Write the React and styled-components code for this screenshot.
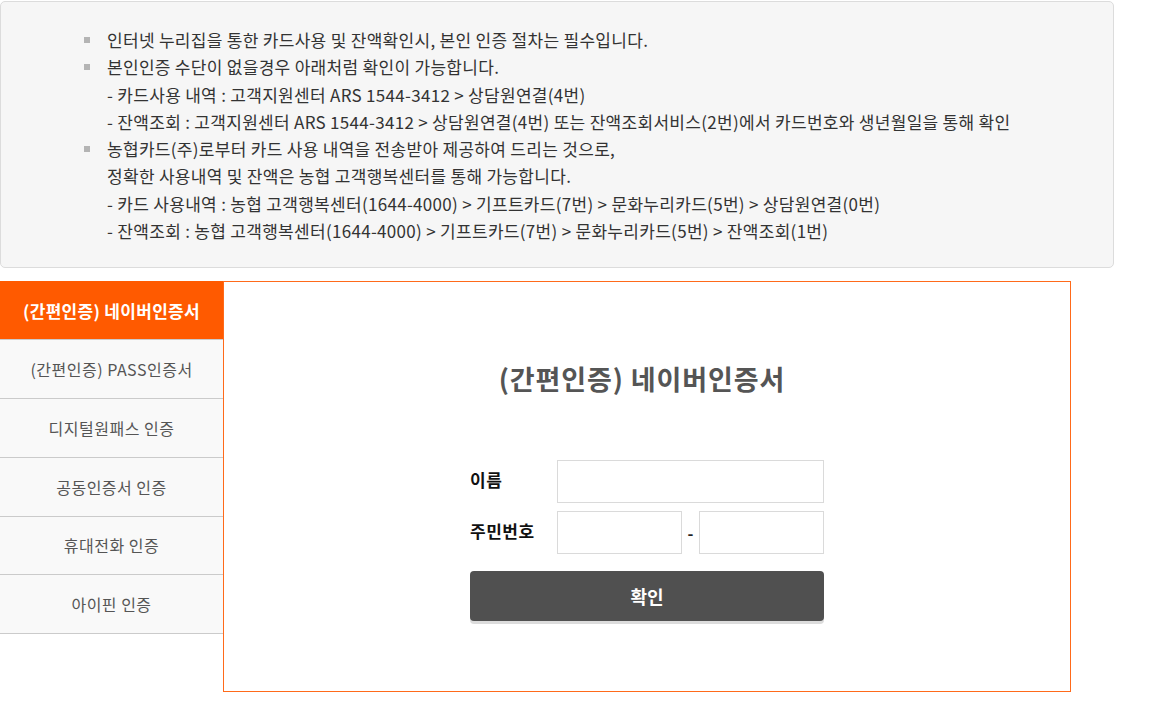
import React from "react";
import styled, { createGlobalStyle } from "styled-components";

const GlobalStyle = createGlobalStyle`
  * { box-sizing: border-box; }
  body {
    margin: 0;
    background: #fff;
    font-family: "Noto Sans CJK KR", "Noto Sans", sans-serif;
    color: #333;
  }
`;

const Page = styled.div`
  width: 1166px;
  padding-top: 1px;
`;

const Notice = styled.div`
  width: 1114px;
  background: #f6f6f6;
  border: 1px solid #dcdcdc;
  border-radius: 5px;
  padding: 24px 0 23px 81px;
`;

const NoticeList = styled.ul`
  list-style: none;
  margin: 0;
  padding: 0;
`;

const NoticeItem = styled.li`
  position: relative;
  padding-left: 25px;
  font-size: 17px;
  line-height: 27.3px;
  letter-spacing: 0.3px;
  color: #333;

  &::before {
    content: "";
    position: absolute;
    left: 2px;
    top: 11px;
    width: 6px;
    height: 6px;
    background: #b4b4b4;
  }
`;

const SubLine = styled.div`
  line-height: 27.3px;
`;

const Body = styled.div`
  display: flex;
  margin-top: 13px;
`;

const TabList = styled.ul`
  list-style: none;
  margin: 0;
  padding: 0;
  width: 223px;
  flex-shrink: 0;
`;

const Tab = styled.li`
  height: 58.8px;
  display: flex;
  align-items: center;
  justify-content: center;
  border-bottom: 1px solid #cbcbcb;
  background: ${(p) => (p.$active ? "#ff5a00" : "#f9f9f9")};
  color: ${(p) => (p.$active ? "#fff" : "#555")};
  font-weight: ${(p) => (p.$active ? 700 : 400)};
  font-size: ${(p) => (p.$active ? 17 : 16)}px;
  letter-spacing: ${(p) => (p.$active ? 0.3 : 0.5)}px;
`;

const Panel = styled.div`
  width: 848px;
  height: 411px;
  border: 1px solid #ff6a1a;
  padding-top: 78px;
  display: flex;
  flex-direction: column;
  align-items: center;
`;

const Title = styled.h2`
  margin: 0 0 0 -10px;
  font-size: 27px;
  line-height: 38px;
  font-weight: 700;
  color: #555;
  letter-spacing: 0.9px;
`;

const Form = styled.form`
  width: 354px;
  margin-top: 62px;
  display: flex;
  flex-direction: column;
  gap: 8px;
`;

const Row = styled.div`
  display: flex;
  align-items: center;
`;

const Label = styled.label`
  width: 87px;
  flex-shrink: 0;
  font-size: 17px;
  font-weight: 700;
  color: #111;
  letter-spacing: 0.5px;
  padding-bottom: 4px;
`;

const Input = styled.input`
  height: 43px;
  width: ${(p) => p.$w}px;
  border: 1px solid #dadada;
  background: #fff;
  padding: 0 10px;
  font-size: 15px;
  outline: none;
`;

const Dash = styled.span`
  width: 17px;
  text-align: center;
  font-weight: 700;
  font-size: 16px;
  color: #222;
`;

const Submit = styled.button`
  margin-top: 9px;
  height: 50px;
  border: none;
  border-radius: 4px;
  background: #505050;
  box-shadow: 0 3px 0 #dcdcdc;
  color: #fff;
  font-family: inherit;
  font-size: 18px;
  font-weight: 700;
  cursor: pointer;
`;

const tabs = [
  "(간편인증) 네이버인증서",
  "(간편인증) PASS인증서",
  "디지털원패스 인증",
  "공동인증서 인증",
  "휴대전화 인증",
  "아이핀 인증",
];

export default function App() {
  return (
    <Page>
      <GlobalStyle />
      <Notice>
        <NoticeList>
          <NoticeItem>
            인터넷 누리집을 통한 카드사용 및 잔액확인시, 본인 인증 절차는 필수입니다.
          </NoticeItem>
          <NoticeItem>
            본인인증 수단이 없을경우 아래처럼 확인이 가능합니다.
            <SubLine>- 카드사용 내역 : 고객지원센터 ARS 1544-3412 &gt; 상담원연결(4번)</SubLine>
            <SubLine>
              - 잔액조회 : 고객지원센터 ARS 1544-3412 &gt; 상담원연결(4번) 또는 잔액조회서비스(2번)에서
              카드번호와 생년월일을 통해 확인
            </SubLine>
          </NoticeItem>
          <NoticeItem>
            농협카드(주)로부터 카드 사용 내역을 전송받아 제공하여 드리는 것으로,
            <SubLine>정확한 사용내역 및 잔액은 농협 고객행복센터를 통해 가능합니다.</SubLine>
            <SubLine>
              - 카드 사용내역 : 농협 고객행복센터(1644-4000) &gt; 기프트카드(7번) &gt; 문화누리카드(5번)
              &gt; 상담원연결(0번)
            </SubLine>
            <SubLine>
              - 잔액조회 : 농협 고객행복센터(1644-4000) &gt; 기프트카드(7번) &gt; 문화누리카드(5번) &gt;
              잔액조회(1번)
            </SubLine>
          </NoticeItem>
        </NoticeList>
      </Notice>
      <Body>
        <TabList>
          {tabs.map((t, i) => (
            <Tab key={t} $active={i === 0}>
              {t}
            </Tab>
          ))}
        </TabList>
        <Panel>
          <Title>(간편인증) 네이버인증서</Title>
          <Form onSubmit={(e) => e.preventDefault()}>
            <Row>
              <Label>이름</Label>
              <Input $w={267} />
            </Row>
            <Row>
              <Label>주민번호</Label>
              <Input $w={125} />
              <Dash>-</Dash>
              <Input $w={125} />
            </Row>
            <Submit type="submit">확인</Submit>
          </Form>
        </Panel>
      </Body>
    </Page>
  );
}
